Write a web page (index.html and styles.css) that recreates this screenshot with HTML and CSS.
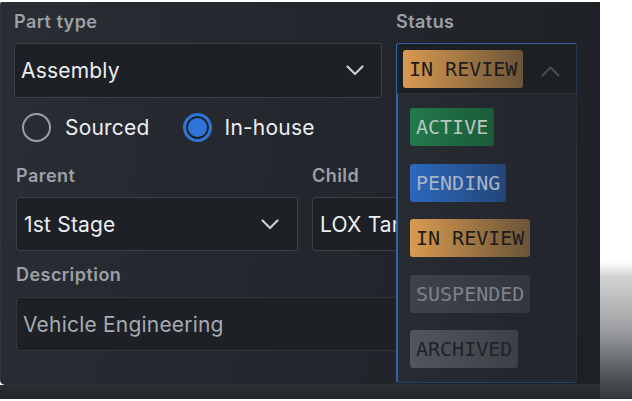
FILE: index.html
```html
<!DOCTYPE html>
<html lang="en">
<head>
<meta charset="utf-8">
<title>Part form</title>
<link rel="stylesheet" href="styles.css">
</head>
<body>
<div class="stage">
  <div class="main">
    <div class="panel">
      <div class="row-top">
        <div class="field part">
          <div class="label">Part type</div>
          <div class="select">
            <span class="value">Assembly</span>
            <svg class="chev" width="18" height="11" viewBox="0 0 18 11"><polyline points="1.5,1.5 9,9 16.5,1.5" fill="none" stroke="#c9ccd1" stroke-width="2.2" stroke-linecap="round" stroke-linejoin="round"/></svg>
          </div>
        </div>
        <div class="field status">
          <div class="label">Status</div>
          <div class="status-wrap">
            <div class="status-select">
              <span class="badge review">IN REVIEW</span>
              <svg class="chev-up" width="19" height="11" viewBox="0 0 19 11"><polyline points="1.5,9.5 9.5,1.5 17.5,9.5" fill="none" stroke="#474c54" stroke-width="2.2" stroke-linecap="round" stroke-linejoin="round"/></svg>
            </div>
            <div class="menu">
              <span class="badge active">ACTIVE</span>
              <span class="badge pending">PENDING</span>
              <span class="badge review">IN REVIEW</span>
              <span class="badge suspended">SUSPENDED</span>
              <span class="badge archived">ARCHIVED</span>
            </div>
          </div>
        </div>
      </div>

      <div class="radios">
        <label class="radio"><span class="dot"></span><span class="rlabel">Sourced</span></label>
        <label class="radio checked"><span class="dot"></span><span class="rlabel">In-house</span></label>
      </div>

      <div class="row-pair">
        <div class="field parent">
          <div class="label">Parent</div>
          <div class="select">
            <span class="value">1st Stage</span>
            <svg class="chev" width="18" height="11" viewBox="0 0 18 11"><polyline points="1.5,1.5 9,9 16.5,1.5" fill="none" stroke="#c9ccd1" stroke-width="2.2" stroke-linecap="round" stroke-linejoin="round"/></svg>
          </div>
        </div>
        <div class="field child">
          <div class="label">Child</div>
          <div class="select">
            <span class="value">LOX Tank</span>
          </div>
        </div>
      </div>

      <div class="field desc">
        <div class="label">Description</div>
        <div class="textbox"><span class="placeholder">Vehicle Engineering</span></div>
      </div>
    </div>
    <div class="base"></div>
  </div>
  <div class="side"></div>
</div>
</body>
</html>
```

FILE: styles.css
```css
* { box-sizing: border-box; }

html, body {
  margin: 0;
  padding: 0;
  background: #ffffff;
}

body {
  font-family: Inter, "Noto Sans", sans-serif;
  width: 632px;
  height: 401px;
  overflow: hidden;
}

.stage {
  display: flex;
  width: 632px;
  height: 401px;
}

.main {
  width: 600px;
  display: flex;
  flex-direction: column;
  padding-top: 2px;
}

.panel {
  position: relative;
  height: 383px;
  background: linear-gradient(100deg, #292d34 0%, #23262c 55%, #1d2025 100%);
  border-left: 1px solid #30343b;
  border-bottom: 1px solid #2c3036;
  border-radius: 2px 0 0 5px;
  padding: 9px 0 0 13px;
}

.base {
  height: 14px;
  background: linear-gradient(180deg, #2b2e34 0%, #23262b 100%);
}

.side {
  width: 32px;
  height: 399px;
  background: linear-gradient(180deg, #ffffff 0px, #ffffff 262px, #d4d4d4 276px, #9c9ea1 330px, #4a4d52 380px, #34373c 399px);
}

.label {
  font-size: 18px;
  line-height: 21px;
  color: #9ca0a7;
  font-weight: 600;
  letter-spacing: 0.45px;
}

.field .label { margin-bottom: 11px; }

.row-top {
  display: flex;
  gap: 14px;
}

.part { width: 368px; }
.status { width: 181px; }

.select {
  height: 55px;
  display: flex;
  align-items: center;
  justify-content: space-between;
  padding: 0 17px 0 6px;
  background: #1d2025;
  border: 1px solid #3b4047;
  border-radius: 3px;
}

.value {
  font-size: 21px;
  color: #eceef0;
  letter-spacing: 0.2px;
  white-space: nowrap;
}

.chev { display: block; }

.status-wrap { position: relative; }

.status-select {
  height: 51px;
  display: flex;
  align-items: center;
  justify-content: space-between;
  padding: 0 16px 0 6px;
  background: #1c1f24;
  border: 1px solid #2f63a8;
  border-right-color: #273a55;
  border-bottom-color: #2a5590;
  border-radius: 3px 3px 0 0;
}

.chev-up { display: block; margin-top: 6px; }

.menu {
  position: absolute;
  left: 0;
  top: 50px;
  width: 181px;
  height: 290px;
  display: flex;
  flex-direction: column;
  align-items: flex-start;
  gap: 17.5px;
  padding: 14px 0 0 12px;
  background: linear-gradient(90deg, #272b32 0%, #22252b 100%);
  border: 1px solid #2b3038;
  border-left: 2px solid #2e64ad;
  border-bottom-color: #24416a;
  border-radius: 0 0 3px 3px;
  z-index: 2;
}

.badge {
  display: inline-block;
  height: 38px;
  line-height: 38px;
  padding: 0 6px;
  border-radius: 3px;
  font-family: "DejaVu Sans Mono", "Liberation Mono", monospace;
  font-size: 20px;
  white-space: nowrap;
}

.badge.active {
  background: linear-gradient(90deg, #22794a, #1b5b39);
  color: #b9c6be;
}
.badge.pending {
  background: linear-gradient(90deg, #2c68bc, #234678);
  color: #a7b5c9;
}
.badge.review {
  background: linear-gradient(90deg, #d99a50, #7a5e3c 85%, #6b5439);
  color: #1c1c1d;
}
.badge.suspended {
  background: linear-gradient(90deg, #3e434a, #33373e);
  color: #7c828a;
}
.badge.archived {
  background: linear-gradient(90deg, #51565e, #3c4047);
  color: #1f2227;
}

.radios {
  display: flex;
  align-items: center;
  gap: 33px;
  margin-top: 15px;
  padding-left: 8px;
  height: 28px;
}

.radio {
  display: flex;
  align-items: center;
  gap: 14px;
}

.dot {
  width: 29px;
  height: 29px;
  border-radius: 50%;
  border: 2px solid #9a9ea5;
}

.radio.checked .dot {
  border: 3px solid #2f74d8;
  background: #2f74d8;
  box-shadow: inset 0 0 0 2px #1d2025;
}

.radio.checked { gap: 13px; }

.rlabel {
  font-size: 21px;
  color: #eceef0;
  letter-spacing: 0.2px;
}

.row-pair {
  display: flex;
  gap: 14px;
  margin-top: 24px;
  padding-left: 2px;
}

.parent { width: 282px; }
.child { width: 258px; }

.row-pair .select { height: 54px; padding-left: 7px; }
.parent .select { padding-right: 18px; }

.desc {
  margin-top: 13px;
  padding-left: 2px;
  width: 556px;
}

.desc .label { margin-bottom: 12px; }

.textbox {
  height: 54px;
  display: flex;
  align-items: center;
  padding: 0 6px;
  background: #1d2025;
  border: 1px solid #32363d;
  border-radius: 3px;
}

.placeholder {
  font-size: 21px;
  color: #a6aab1;
  letter-spacing: 0.2px;
}
```
